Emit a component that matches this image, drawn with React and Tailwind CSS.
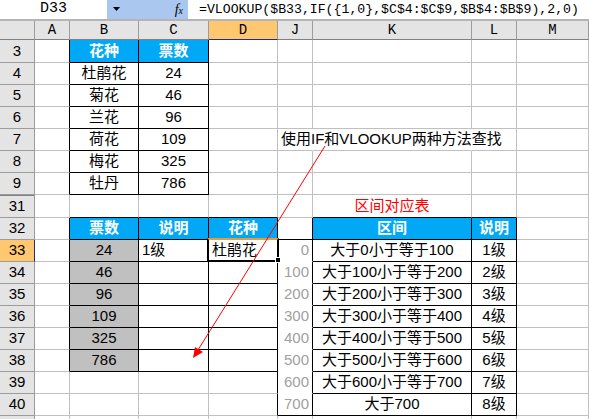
import React from "react";

// column widths include the right grid line
const COLS = [
  { k: "A", w: "w-[35px]" },
  { k: "B", w: "w-[69px]" },
  { k: "C", w: "w-[70px]" },
  { k: "D", w: "w-[69px]" },
  { k: "J", w: "w-[35px]" },
  { k: "K", w: "w-[159px]" },
  { k: "L", w: "w-[45px]" },
  { k: "M", w: "w-[72px]" },
];

const ROWS = [3, 4, 5, 6, 7, 8, 9, 31, 32, 33, 34, 35, 36, 37, 38, 39, 40, 41];

// ranges with all borders (col indexes into COLS)
const BOXES = [
  { r1: 3, r2: 9, c1: 1, c2: 2 },
  { r1: 32, r2: 38, c1: 1, c2: 3 },
  { r1: 32, r2: 40, c1: 5, c2: 6 },
];

const CELLS = {
  "3-1": { t: "花种", k: "hdr" },
  "3-2": { t: "票数", k: "hdr" },
  "7-4": { t: "使用IF和VLOOKUP两种方法查找", k: "note" },
  "31-5": { t: "区间对应表", k: "red" },
  "32-1": { t: "票数", k: "hdr" },
  "32-2": { t: "说明", k: "hdr" },
  "32-3": { t: "花种", k: "hdr" },
  "32-5": { t: "区间", k: "hdr" },
  "32-6": { t: "说明", k: "hdr" },
  "33-2": { t: "1级", k: "left" },
  "33-3": { t: "杜鹃花", k: "left", sel: true },
};

const flowers = [
  ["杜鹃花", "24"],
  ["菊花", "46"],
  ["兰花", "96"],
  ["荷花", "109"],
  ["梅花", "325"],
  ["牡丹", "786"],
];
flowers.forEach(([name, votes], i) => {
  CELLS[`${4 + i}-1`] = { t: name };
  CELLS[`${4 + i}-2`] = { t: votes };
  CELLS[`${33 + i}-1`] = { t: votes, k: "grey" };
});

const ranges = [
  "大于0小于等于100",
  "大于100小于等于200",
  "大于200小于等于300",
  "大于300小于等于400",
  "大于400小于等于500",
  "大于500小于等于600",
  "大于600小于等于700",
  "大于700",
];
ranges.forEach((txt, i) => {
  CELLS[`${33 + i}-4`] = { t: String(i * 100), k: "num" };
  CELLS[`${33 + i}-5`] = { t: txt };
  CELLS[`${33 + i}-6`] = { t: `${i + 1}级` };
});

const KIND = {
  hdr: "bg-[#00a8f5] text-white font-bold justify-center",
  grey: "bg-[#c0c0c0] justify-center",
  left: "justify-start pl-[3px]",
  num: "justify-end pr-[3px] text-[#a0a0a0]",
  red: "justify-center text-[#ff0000]",
  note: "justify-start pl-[3px] whitespace-nowrap",
  plain: "justify-center",
};

const inBox = (r, c) =>
  BOXES.some((b) => r >= b.r1 && r <= b.r2 && c >= b.c1 && c <= b.c2);

const inJBox = (r, c) => c === 4 && r >= 33 && r <= 40;

function borderClasses(ri, c) {
  const r = ROWS[ri];
  const next = ROWS[ri + 1];
  const rightBlack =
    inBox(r, c) || inBox(r, c + 1) || inJBox(r, c) || inJBox(r, c + 1);
  const bottomBlack =
    inBox(r, c) || inBox(next, c) || (c === 4 && (r === 32 || r === 40));
  // overflowing note text hides the grid line
  const rightHidden = r === 7 && (c === 4 || c === 5);
  const bottomHidden = inJBox(r, c);

  const rc = rightBlack
    ? "border-r-black"
    : rightHidden
    ? "border-r-white"
    : "border-r-[#c0c0c0]";
  const bc = bottomBlack
    ? "border-b-black"
    : bottomHidden
    ? "border-b-white"
    : "border-b-[#c0c0c0]";
  return `${rc} ${bc}`;
}

const FormulaBar = () => (
  <div className="flex h-[19px] font-['Liberation_Mono',monospace] text-[13.2px] text-black">
    <div className="w-[107px] bg-white flex items-center justify-center text-[15px]">D33</div>
    <div className="w-[81px] bg-[#aac8ef] flex items-center">
      <svg width="8" height="5" className="ml-[6px]">
        <polygon points="0,0 7,0 3.5,4" fill="#000" />
      </svg>
      <span className="ml-auto mr-[5px] font-['Liberation_Serif',serif] italic text-[14px] leading-none">
        f<span className="text-[10px]">x</span>
      </span>
    </div>
    <div className="flex-1 bg-white pl-[11px] flex items-center whitespace-nowrap overflow-hidden">
      =VLOOKUP($B33,IF({"{"}1,0{"}"},$C$4:$C$9,$B$4:$B$9),2,0)
    </div>
  </div>
);

const ColumnHeader = () => (
  <div className="flex h-[19px] font-['Liberation_Mono',monospace] text-[14px]">
    <div className="w-[35px] shrink-0 bg-[#e4e4e4] border-r border-b border-r-[#9c9c9c] border-b-[#808080]" />
    {COLS.map((col) => (
      <div
        key={col.k}
        className={`${col.w} shrink-0 flex items-center justify-center border-r border-b ${
          col.k === "D"
            ? "bg-[#ffc870] border-r-[#9c9c9c] border-b-[#1f2f7a]"
            : "bg-[#e4e4e4] border-r-[#9c9c9c] border-b-[#808080]"
        }`}
      >
        {col.k}
      </div>
    ))}
  </div>
);

const Cell = ({ ri, c, col }) => {
  const r = ROWS[ri];
  const cell = CELLS[`${r}-${c}`];
  const kind = KIND[cell?.k || "plain"];
  return (
    <div
      className={`${col.w} shrink-0 h-full relative flex items-center border-r border-b ${borderClasses(
        ri,
        c
      )} ${kind}`}
    >
      {cell && <span className="relative z-[1]">{cell.t}</span>}
      {cell?.sel && (
        <>
          <div className="absolute -left-[2px] -top-[2px] w-[72px] h-[24px] border-2 border-black border-t-[#e89a3c] z-[2]" />
          <div className="absolute left-[66px] top-[17px] w-[6px] h-[6px] bg-black border border-white z-[3]" />
        </>
      )}
    </div>
  );
};

const SheetRow = ({ ri }) => {
  const r = ROWS[ri];
  const tall = r === 3 || r === 31;
  return (
    <div className={`flex ${tall ? "h-[23px]" : "h-[22px]"}`}>
      <div
        className={`w-[35px] shrink-0 flex items-center justify-center border-r border-b text-[15px] ${
          r === 33
            ? "bg-[#ffc870] border-r-[#1f2f7a] border-b-[#9c9c9c]"
            : "bg-[#e4e4e4] border-r-[#9c9c9c] border-b-[#9c9c9c]"
        } ${r === 31 ? "border-t border-t-[#808080]" : ""}`}
      >
        {r < 41 ? r : ""}
      </div>
      {COLS.map((col, c) => (
        <Cell key={col.k} ri={ri} c={c} col={col} />
      ))}
    </div>
  );
};

export default function App() {
  return (
    <div className="relative w-[589px] h-[419px] overflow-hidden bg-white text-black text-[15px] font-['Liberation_Sans','Noto_Sans_CJK_SC',sans-serif]">
      <FormulaBar />
      <div className="h-[2px] bg-[#b4b4b4]" />
      <ColumnHeader />
      {ROWS.map((r, ri) => (
        <SheetRow key={r} ri={ri} />
      ))}

      {/* red arrow drawn over the sheet */}
      <svg
        className="absolute inset-0 pointer-events-none z-10"
        width="589"
        height="419"
      >
        <line x1="325" y1="146" x2="198" y2="350" stroke="#ff0000" strokeWidth="1" />
        <polygon points="193,358 195,347 203,352" fill="#ff0000" />
      </svg>
    </div>
  );
}
